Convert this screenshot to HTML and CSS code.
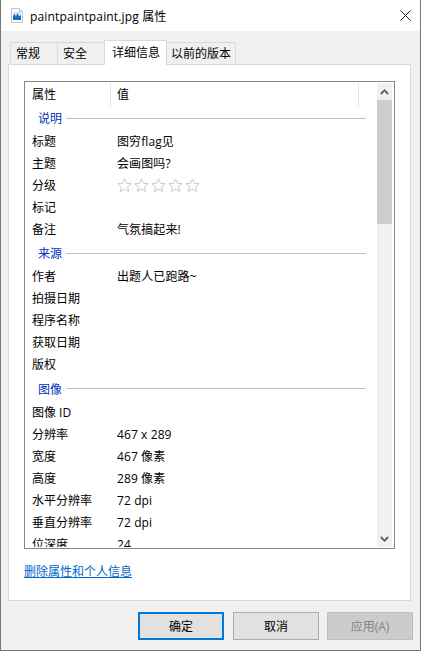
FILE: index.html
```html
<!DOCTYPE html>
<html lang="zh-CN">
<head>
<meta charset="utf-8">
<title>paintpaintpaint.jpg 属性</title>
<link rel="stylesheet" href="styles.css">
</head>
<body>
<div class="window">
  <header class="titlebar">
    <svg class="file-icon" width="12" height="15" viewBox="0 0 12 15">
      <path d="M.5.5h8l3 3v11H.5z" fill="#fff" stroke="#c4c4c4"/>
      <path d="M8.5.5v3h3" fill="#eee" stroke="#c4c4c4"/>
      <rect x="2" y="4" width="8" height="8" fill="#cfe6fa"/>
      <path d="M2 12V8l1.500-2 1.500 2.500L6.500 5 8 8.500 10 7v5z" fill="#0f6fc6"/>
    </svg>
    <span class="title">paintpaintpaint.jpg 属性</span>
    <svg class="close" width="11" height="11" viewBox="0 0 11 11">
      <path d="M.5.5l10 10M10.500.5l-10 10" stroke="#1a1a1a" fill="none"/>
    </svg>
  </header>
  <main class="body">
    <nav class="tabs">
      <div class="tab tab-first">常规</div>
      <div class="tab">安全</div>
      <div class="tab tab-active">详细信息</div>
      <div class="tab tab-last">以前的版本</div>
    </nav>
    <section class="panel">
      <div class="listbox">
        <div class="list">
          <div class="list-head">
            <div class="head-name">属性</div>
            <div class="head-value">值</div>
            <div class="head-rest"></div>
          </div>
          <div class="group group-first"><span>说明</span></div>
          <div class="row"><span class="name">标题</span><span class="value">图穷flag见</span></div>
          <div class="row"><span class="name">主题</span><span class="value">会画图吗?</span></div>
          <div class="row"><span class="name">分级</span>
            <span class="stars">
              <svg class="star" viewBox="0 0 15 14"><path d="M7.500.8l1.900 4.500 4.800.4-3.700 3.100 1.200 4.700-4.200-2.500-4.200 2.500 1.200-4.700L.8 5.700l4.800-.4z"/></svg>
              <svg class="star" viewBox="0 0 15 14"><path d="M7.500.8l1.900 4.500 4.800.4-3.700 3.100 1.200 4.700-4.200-2.500-4.200 2.500 1.200-4.700L.8 5.700l4.800-.4z"/></svg>
              <svg class="star" viewBox="0 0 15 14"><path d="M7.500.8l1.900 4.500 4.800.4-3.700 3.100 1.200 4.700-4.200-2.500-4.200 2.500 1.200-4.700L.8 5.700l4.800-.4z"/></svg>
              <svg class="star" viewBox="0 0 15 14"><path d="M7.500.8l1.900 4.500 4.800.4-3.700 3.100 1.200 4.700-4.200-2.500-4.200 2.500 1.200-4.700L.8 5.700l4.800-.4z"/></svg>
              <svg class="star" viewBox="0 0 15 14"><path d="M7.500.8l1.900 4.500 4.800.4-3.700 3.100 1.200 4.700-4.200-2.500-4.200 2.500 1.200-4.700L.8 5.700l4.800-.4z"/></svg>
            </span>
          </div>
          <div class="row"><span class="name">标记</span></div>
          <div class="row"><span class="name">备注</span><span class="value">气氛搞起来!</span></div>
          <div class="group"><span>来源</span></div>
          <div class="row"><span class="name">作者</span><span class="value">出题人已跑路~</span></div>
          <div class="row"><span class="name">拍摄日期</span></div>
          <div class="row"><span class="name">程序名称</span></div>
          <div class="row"><span class="name">获取日期</span></div>
          <div class="row"><span class="name">版权</span></div>
          <div class="group group-tall"><span>图像</span></div>
          <div class="row"><span class="name">图像 ID</span></div>
          <div class="row"><span class="name">分辨率</span><span class="value">467 x 289</span></div>
          <div class="row"><span class="name">宽度</span><span class="value">467 像素</span></div>
          <div class="row"><span class="name">高度</span><span class="value">289 像素</span></div>
          <div class="row"><span class="name">水平分辨率</span><span class="value">72 dpi</span></div>
          <div class="row"><span class="name">垂直分辨率</span><span class="value">72 dpi</span></div>
          <div class="row"><span class="name">位深度</span><span class="value">24</span></div>
        </div>
        <div class="scrollbar">
          <div class="sb-btn">
            <svg width="9" height="6" viewBox="0 0 9 6"><path d="M.8 5L4.500 1.300 8.200 5" fill="none" stroke="#606060" stroke-width="1.800"/></svg>
          </div>
          <div class="sb-thumb"></div>
          <div class="sb-track"></div>
          <div class="sb-btn">
            <svg width="9" height="6" viewBox="0 0 9 6"><path d="M.8 1L4.500 4.700 8.200 1" fill="none" stroke="#606060" stroke-width="1.800"/></svg>
          </div>
        </div>
      </div>
      <a class="link" href="#">删除属性和个人信息</a>
    </section>
    <footer class="buttons">
      <button class="btn btn-default">确定</button>
      <button class="btn">取消</button>
      <button class="btn btn-disabled" disabled>应用(A)</button>
    </footer>
  </main>
</div>
</body>
</html>
```

FILE: styles.css
```css
* { box-sizing: border-box; }
html, body { margin: 0; padding: 0; }
body {
  width: 421px;
  height: 651px;
  overflow: hidden;
  font-family: "Open Sans", "Noto Sans CJK SC", sans-serif;
  font-size: 12px;
  color: #000;
  background: #f0f0f0;
}
.window {
  display: flex;
  flex-direction: column;
  width: 421px;
  height: 651px;
  border-right: 1px solid #777;
  border-bottom: 1px solid #777;
  border-left: 1px solid #777;
}
.titlebar {
  display: flex;
  align-items: center;
  height: 31px;
  flex: none;
  padding: 0 9px 0 10px;
  background: #fff;
}
.file-icon { flex: none; margin-top: -1px; }
.title {
  margin-left: 7px;
  flex: 1;
  padding-top: 2px;
  line-height: 16px;
  letter-spacing: 0.15px;
  white-space: nowrap;
}
.close { flex: none; }
.body {
  flex: 1;
  display: flex;
  flex-direction: column;
  padding: 9px 7px 0 7px;
}
.tabs {
  display: flex;
  align-items: flex-end;
  height: 24px;
  padding-left: 2px;
  position: relative;
  z-index: 1;
}
.tab {
  width: 47px;
  height: 22px;
  padding-left: 5px;
  line-height: 21px;
  border: 1px solid #d9d9d9;
  border-bottom: 0;
  border-right: 0;
  background: #f0f0f0;
}
.tab-active {
  width: 63px;
  height: 25px;
  margin-bottom: -1px;
  padding-left: 7px;
  line-height: 23px;
  background: #fff;
  border-right: 1px solid #d9d9d9;
}
.tab-last {
  width: 69px;
  padding-left: 4px;
  border-left: 0;
  border-right: 1px solid #d9d9d9;
}
.panel {
  width: 403px;
  height: 537px;
  flex: none;
  padding: 16px 15px 0 15px;
  background: #fff;
  border: 1px solid #d9d9d9;
}
.listbox {
  display: flex;
  height: 468px;
  padding: 1px 2px 1px 0;
  border: 1px solid #828790;
  background: #fff;
}
.list {
  flex: 1;
  min-width: 0;
  overflow: hidden;
}
.list-head {
  display: flex;
  height: 25px;
}
.head-name, .head-value {
  line-height: 24px;
  height: 24px;
  border-right: 1px solid #e5e5e5;
  padding-left: 7px;
  flex: none;
}
.head-name { width: 86px; }
.head-value { width: 248px; padding-left: 6px; }
.group {
  display: flex;
  align-items: center;
  gap: 4px;
  height: 25px;
  padding: 1px 11px 0 13px;
  color: #0033bc;
}
.group-first { height: 22px; padding: 0 11px 2px 13px; }
.group-tall { height: 26px; }
.group::after {
  content: "";
  flex: 1;
  height: 1px;
  background: #b4c1dd;
}
.row {
  display: flex;
  align-items: center;
  height: 22px;
  padding-left: 7px;
  white-space: nowrap;
}
.name { width: 85px; flex: none; }
.value { letter-spacing: 0.1px; }
.stars { display: flex; gap: 2px; }
.star {
  display: block;
  width: 15px;
  height: 14px;
  fill: #fff;
  stroke: #c8c8c8;
}
.scrollbar {
  display: flex;
  flex-direction: column;
  flex: none;
  width: 15px;
  background: #f0f0f0;
}
.sb-btn {
  display: flex;
  align-items: center;
  justify-content: center;
  height: 17px;
  flex: none;
}
.sb-thumb { height: 124px; flex: none; background: #cdcdcd; }
.sb-track { flex: 1; }
.link {
  display: block;
  margin-top: 15px;
  line-height: 16px;
  color: #0066cc;
  text-decoration: underline;
}
.buttons {
  display: flex;
  gap: 8px;
  justify-content: flex-end;
  margin-top: 11px;
}
.btn {
  width: 86px;
  height: 28px;
  padding: 0;
  font: inherit;
  color: #000;
  background: #e1e1e1;
  border: 1px solid #adadad;
}
.btn-default { margin-right: 1px; border: 2px solid #0078d7; }
.btn-disabled {
  color: #838383;
  background: #cccccc;
  border-color: #bfbfbf;
}
```
